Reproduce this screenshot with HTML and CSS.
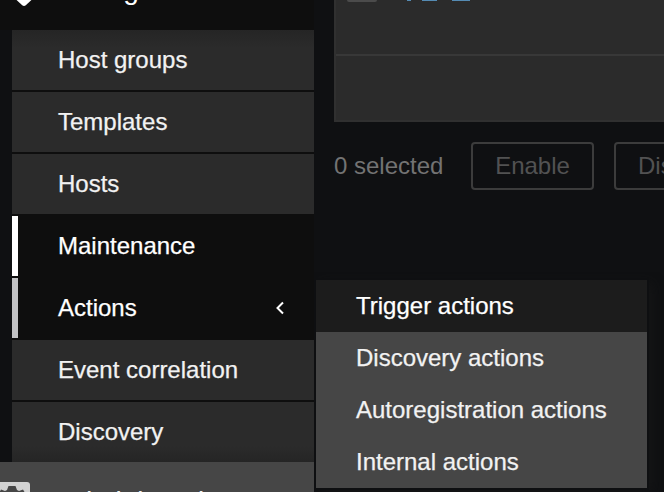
FILE: index.html
```html
<!DOCTYPE html>
<html lang="en">
<head>
<meta charset="utf-8">
<title>Actions</title>
<link rel="stylesheet" href="styles.css">
</head>
<body>
<div class="app">
  <nav class="sidebar">
    <div class="section section-open">
      <svg class="wrench" viewBox="0 0 32 32"><path d="M16 13h16v1.500L25.800 20.200Q24 21.800 22.200 20.200L16 14.500Z" fill="#fff"/></svg>
      <span class="section-label">Configuration</span>
    </div>
    <ul class="submenu">
      <li>Host groups</li>
      <li>Templates</li>
      <li>Hosts</li>
      <li class="selected">Maintenance</li>
      <li class="expanded">Actions
        <svg class="chevron" viewBox="0 0 10 14"><path d="M8 1.500L2.500 7L8 12.500" fill="none" stroke="#fff" stroke-width="2"/></svg>
      </li>
      <li>Event correlation</li>
      <li>Discovery</li>
    </ul>
    <div class="section section-admin">
      <svg class="gear" viewBox="0 0 36 36"><rect width="36" height="36" rx="3" fill="#d2d2d2"/><path d="M14.500 4h7l1.500 4 2 1 4-1.500 3 5-3 3v5l3 3-3 5-4-1.500-3 1-1.500 4h-5l-1.500-4-3-1-4 1.500-3-5 3-3v-5l-3-3 3-5 4 1.500 2-1z" fill="#464646"/></svg>
      <span class="section-label">Administration</span>
    </div>
  </nav>
  <main class="content">
    <div class="table">
      <div class="row row-top"><span class="check"></span><span class="bit a"></span><span class="bit b"></span><span class="bit c"></span></div>
      <div class="row row-foot"></div>
    </div>
    <div class="toolbar">
      <span class="count">0 selected</span>
      <button class="btn enable" disabled>Enable</button>
      <button class="btn disable" disabled>Disable</button>
    </div>
  </main>
  <ul class="flyout">
    <li class="current">Trigger actions</li>
    <li>Discovery actions</li>
    <li>Autoregistration actions</li>
    <li>Internal actions</li>
  </ul>
</div>
</body>
</html>
```
FILE: styles.css
```css
* { box-sizing: border-box; }
body { margin: 0; background: #0f1012; color: #f2f2f2; font: 24px/28px "Liberation Sans", Arial, sans-serif; overflow: hidden; }
ul { margin: 0; padding: 0; list-style: none; }
.app { position: relative; display: flex; width: 664px; height: 492px; overflow: hidden; }
.sidebar { flex: none; width: 314px; }
.section { display: flex; align-items: center; height: 72px; white-space: nowrap; }
.section-open { margin-top: -42px; background: #0e0e0e; color: #fff; }
.wrench { width: 32px; height: 32px; flex: none; margin-top: 14px; }
.section-label { font-size: 28px; }
.section-open .section-label { margin-left: 26px; margin-bottom: 9px; }
.submenu { margin-left: 12px; background: #0e0e0e; }
.submenu li, .flyout li { -webkit-text-stroke: .25px; }
.submenu li { display: flex; align-items: center; height: 60px; margin-bottom: 2px; padding-left: 46px; background: #2b2b2b; }
.submenu li:first-child { background: linear-gradient(#252525, #2b2b2b 18px); }
.submenu li:last-child { margin-bottom: 0; background: linear-gradient(#2b2b2b 44px, #252525); }
.submenu .selected, .submenu .expanded { background: #0e0e0e; border-left: 6px solid #fff; padding-left: 40px; color: #fff; }
.submenu .expanded { border-left-color: #c1c2c4; }
.chevron { width: 10px; height: 14px; margin-left: auto; margin-right: 29px; }
.section-admin { background: #464646; }
.gear { width: 36px; height: 36px; flex: none; margin-left: -6px; margin-top: 4px; }
.section-admin .section-label { margin-left: 28px; margin-top: 7px; }
.content { flex: none; width: 350px; padding-left: 20px; }
.table { height: 122px; border: 2px solid #303030; border-width: 0 0 2px 2px; background: #2b2b2b; }
.row-top { display: flex; height: 56px; border-bottom: 2px solid #383838; }
.check { width: 30px; height: 2px; margin-left: 11px; background: #4b4b4b; border-radius: 0 0 3px 3px; }
.bit { height: 1px; background: #558bb3; }
.a { width: 4px; margin-left: 30px; }
.b { width: 15px; margin-left: 11px; }
.c { width: 18px; margin-left: 15px; }
.toolbar { display: flex; align-items: center; margin-top: 20px; width: 420px; color: #737373; }
.count { width: 137px; }
.btn { height: 48px; padding: 0 22px; border: 2px solid #3c3c3c; border-radius: 4px; background: transparent; color: #525252; font: inherit; }
.enable { width: 123px; }
.disable { margin-left: 20px; }
.flyout { position: absolute; left: 316px; top: 280px; width: 331px; background: #464646; box-shadow: 0 0 0 2px #0e0f11, 4px 4px 12px rgba(26,26,26,.7); clip-path: inset(-8px -20px -20px -2px); }
.flyout li { display: flex; align-items: center; height: 52px; padding-left: 40px; }
.flyout .current { background: #1c1c1c; color: #fff; }
```
